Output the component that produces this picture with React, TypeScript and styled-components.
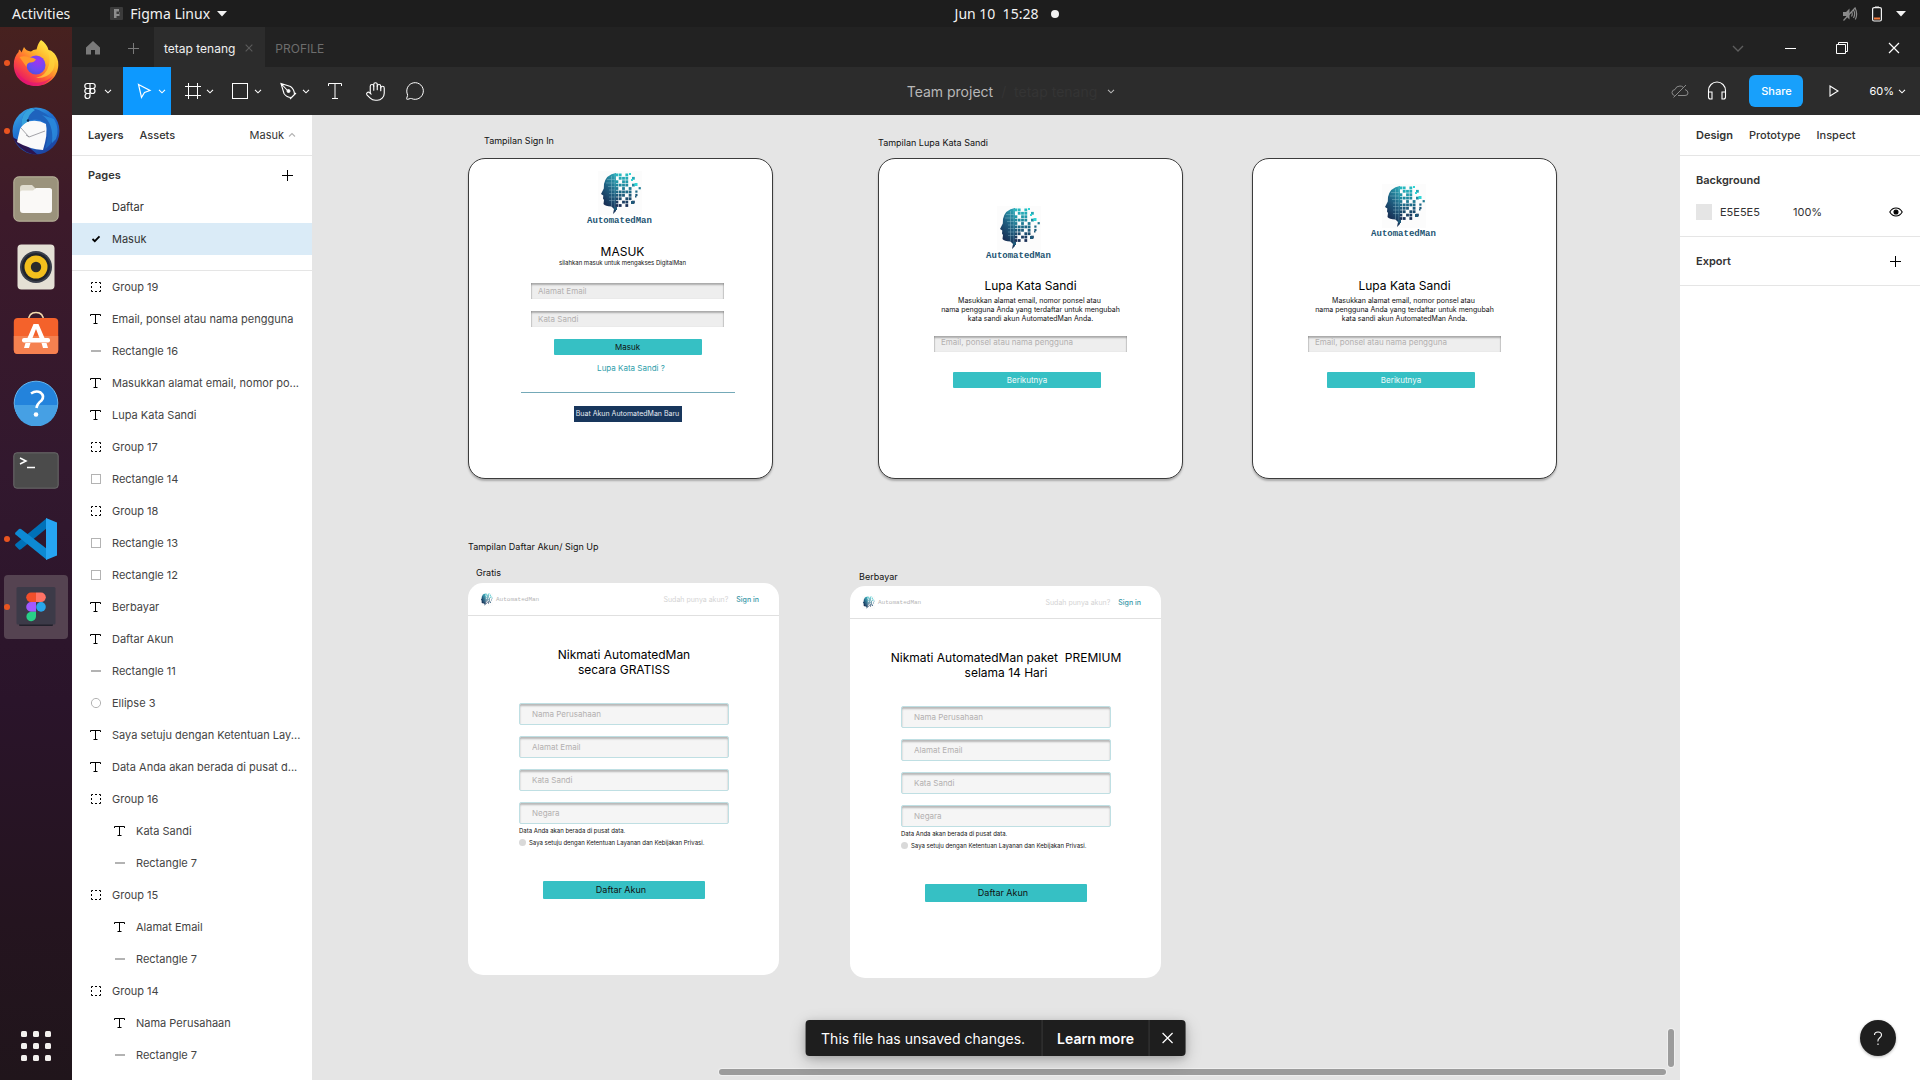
import React from 'react';
import styled, { createGlobalStyle } from 'styled-components';
import { Hand, MessageCircle } from 'lucide-react';

const GlobalStyle = createGlobalStyle`
  *, *::before, *::after { box-sizing: border-box; }
  body { margin: 0; font-family: Inter, "Liberation Sans", sans-serif; font-size: 11px; color: #333; }
  button, input { font: inherit; color: inherit; }
  button { border: 0; padding: 0; background: none; }
  h1, h2, p, ul { margin: 0; padding: 0; font-weight: 400; }
  ul { list-style: none; }
  a { color: inherit; text-decoration: none; }
  svg { display: block; flex: none; }
`;

const Desktop = styled.div`
  display: grid;
  grid-template-rows: 27px 1fr;
  height: 100vh;
  overflow: hidden;
  background: #1d1d1d;
`;

/* ---------- System bar ---------- */
const SystemBar = styled.header`
  display: grid;
  grid-template-columns: 1fr auto 1fr;
  align-items: center;
  padding: 0 12px;
  background: #1d1d1d;
  color: #f2f2f2;
  font-family: "Noto Sans", sans-serif;
  font-size: 14px;
`;
const SystemLeft = styled.div`
  display: flex;
  align-items: center;
  gap: 40px;
`;
const SystemApp = styled.button`
  display: flex;
  align-items: center;
  gap: 7px;
`;
const Clock = styled.button`
  display: flex;
  align-items: center;
  gap: 13px;
  padding-left: 94px;
  white-space: pre;
`;
const ClockDot = styled.span`
  width: 8px;
  height: 8px;
  border-radius: 50%;
  background: #f2f2f2;
`;
const SystemTray = styled.div`
  display: flex;
  align-items: center;
  justify-content: flex-end;
  gap: 14px;
  padding-right: 2px;
`;

const Body = styled.div`
  display: grid;
  grid-template-columns: 72px 1fr;
  min-height: 0;
`;

/* ---------- Dock ---------- */
const DockBar = styled.nav`
  display: flex;
  flex-direction: column;
  align-items: center;
  justify-content: space-between;
  padding: 4px 4px 2px;
  background: linear-gradient(#47211f 0%, #3c1a2a 18%, #32182e 42%, #2a142a 64%, #24141f 85%, #20151b 100%);
`;
const DockList = styled.div`
  display: flex;
  flex-direction: column;
  gap: 4px;
`;
const DockButton = styled.button<{ $active?: boolean; $running?: boolean }>`
  position: relative;
  display: flex;
  align-items: center;
  justify-content: center;
  width: 64px;
  height: 64px;
  border-radius: 4px;
  background: ${p => (p.$active ? '#554351' : 'transparent')};
  &::before {
    content: '';
    display: ${p => (p.$running ? 'block' : 'none')};
    position: absolute;
    left: 0;
    top: 29px;
    width: 6px;
    height: 6px;
    border-radius: 50%;
    background: #e95420;
  }
`;

/* ---------- Application window ---------- */
const Window = styled.div`
  display: grid;
  grid-template-rows: 40px 48px 1fr;
  min-width: 0;
  min-height: 0;
`;
const TabBar = styled.div`
  display: flex;
  background: #222;
  color: #6d6d6d;
  font-size: 12px;
`;
const TabIcon = styled.button`
  display: flex;
  align-items: center;
  justify-content: center;
  width: 41px;
  padding-top: 2px;
  color: #7a7a7a;
`;
const FileTab = styled.div<{ $active?: boolean }>`
  display: flex;
  align-items: center;
  gap: 10px;
  padding: 2px ${p => (p.$active ? '12px' : '10px')} 0 10px;
  background: ${p => (p.$active ? '#2c2c2c' : 'transparent')};
  color: ${p => (p.$active ? '#f0f0f0' : '#6d6d6d')};
`;
const CloseTab = styled.button`
  color: #5c5c5c;
`;
const WindowControls = styled.div`
  display: flex;
  margin-left: auto;
`;
const WindowButton = styled.button<{ $dim?: boolean }>`
  display: flex;
  align-items: center;
  justify-content: center;
  width: 52px;
  padding-top: 2px;
  color: ${p => (p.$dim ? '#5e5e5e' : '#fff')};
`;

const Toolbar = styled.div`
  display: grid;
  grid-template-columns: 1fr auto 1fr;
  background: #2c2c2c;
  color: #fff;
`;
const Tools = styled.div`
  display: flex;
`;
const ToolButton = styled.button<{ $active?: boolean; $single?: boolean; $menu?: boolean }>`
  display: flex;
  align-items: center;
  justify-content: ${p => (p.$single ? 'center' : 'flex-start')};
  width: ${p => (p.$single ? '40px' : p.$menu ? '51px' : '48px')};
  padding-left: ${p => (p.$single ? '0' : p.$menu ? '6px' : '9px')};
  background: ${p => (p.$active ? '#0d99ff' : 'transparent')};
`;
const FileTitle = styled.div`
  display: flex;
  align-items: center;
  padding-left: 32px;
  font-size: 14px;
  color: #b8b8b8;
`;
const FaintName = styled.span`
  padding: 0 8px;
  color: #343434;
  white-space: pre;
`;
const ToolbarRight = styled.div`
  display: flex;
  align-items: center;
  justify-content: flex-end;
  gap: 22px;
  padding-right: 12px;
`;
const StatusIcons = styled.div`
  display: flex;
  align-items: center;
  gap: 18px;
`;
const ShareButton = styled.button`
  width: 54px;
  height: 32px;
  border-radius: 6px;
  background: #18a0fb;
  color: #fff;
  font-weight: 500;
`;
const PlayButton = styled.button`
  padding: 0 8px 0 4px;
`;
const Zoom = styled.button`
  display: flex;
  align-items: center;
  gap: 2px;
`;

const Workspace = styled.div`
  display: grid;
  grid-template-columns: 240px 1fr 241px;
  min-height: 0;
`;

/* ---------- Panels ---------- */
const Panel = styled.aside<{ $right?: boolean }>`
  display: flex;
  flex-direction: column;
  min-height: 0;
  overflow: hidden;
  background: #fff;
  border-left: ${p => (p.$right ? '1px solid #e5e5e5' : '0')};
`;
const PanelTabs = styled.div`
  display: flex;
  align-items: center;
  gap: 16px;
  flex: none;
  height: 41px;
  padding: 0 14px 0 16px;
  border-bottom: 1px solid #e5e5e5;
`;
const PanelTab = styled.button<{ $active?: boolean; $strong?: boolean }>`
  font-weight: ${p => (p.$active ? 600 : p.$strong ? 500 : 400)};
  color: #333;
`;
const PagePicker = styled.button`
  display: flex;
  align-items: center;
  gap: 2px;
  margin-left: auto;
`;
const PagesSection = styled.section`
  flex: none;
  padding: 3px 0 15px;
  border-bottom: 1px solid #e5e5e5;
`;
const SectionHeader = styled.div`
  display: flex;
  align-items: center;
  justify-content: space-between;
  height: 32px;
  padding: 0 19px 0 16px;
`;
const SectionTitle = styled.h2`
  font-size: 11px;
  font-weight: 600;
`;
const PageRow = styled.li<{ $selected?: boolean }>`
  display: flex;
  align-items: center;
  gap: 8px;
  height: 32px;
  padding: 0 16px;
  background: ${p => (p.$selected ? '#daebf7' : 'transparent')};
`;
const PageMark = styled.span`
  width: 16px;
`;
const LayerList = styled.ul`
  flex: 1;
  min-height: 0;
  overflow: hidden;
`;
const LayerRow = styled.li<{ $nested?: boolean }>`
  display: flex;
  align-items: center;
  gap: 8px;
  height: 32px;
  padding: 0 8px 0 ${p => (p.$nested ? '40px' : '16px')};
`;
const LayerName = styled.span`
  white-space: nowrap;
  color: #444;
`;
const DesignSection = styled.section`
  padding: 8px 0;
  border-bottom: 1px solid #e5e5e5;
`;
const ColourRow = styled.div`
  display: flex;
  align-items: center;
  height: 32px;
  padding: 0 17px 0 16px;
`;
const Swatch = styled.span`
  width: 16px;
  height: 16px;
  margin-right: 8px;
  background: #e5e5e5;
`;
const Hex = styled.span`
  width: 73px;
`;
const EyeButton = styled.button`
  margin-left: auto;
`;

/* ---------- Canvas ---------- */
const Canvas = styled.main`
  position: relative;
  overflow: hidden;
  background: #e5e5e5;
`;
const CanvasText = styled.p<{ $x: number; $y: number }>`
  position: absolute;
  left: ${p => p.$x}px;
  top: ${p => p.$y}px;
  font-size: 9px;
  line-height: 12px;
  color: #111;
  white-space: nowrap;
`;
const LoginBoard = styled.article<{ $x: number; $y: number; $top: number }>`
  position: absolute;
  left: ${p => p.$x}px;
  top: ${p => p.$y}px;
  display: flex;
  flex-direction: column;
  align-items: center;
  width: 305px;
  height: 321px;
  padding-top: ${p => p.$top}px;
  border: 1px solid #3c3c3c;
  border-radius: 17px;
  background: #fff;
  box-shadow: 0 2px 2px rgba(0, 0, 0, 0.25);
  color: #111;
`;
const Brand = styled.div<{ $shift: number; $gap: number }>`
  display: flex;
  flex-direction: column;
  align-items: center;
  padding-right: ${p => p.$shift}px;
  margin-bottom: ${p => p.$gap}px;
  font: 700 9px/12px "Liberation Mono", monospace;
  color: #1d5573;
`;
const BoardTitle = styled.h1`
  font-size: 12px;
  line-height: 14px;
  text-align: center;
  white-space: pre;
  color: #000;
`;
const BoardText = styled.p<{ $small?: boolean }>`
  font-size: ${p => (p.$small ? '6px' : '7px')};
  line-height: ${p => (p.$small ? '8px' : '9px')};
  text-align: center;
  white-space: pre;
`;
const Intro = styled.div<{ $shift: number; $gap: number }>`
  display: flex;
  flex-direction: column;
  align-items: center;
  gap: ${p => p.$gap}px;
  padding-left: ${p => p.$shift}px;
`;
const SignInForm = styled.form`
  display: flex;
  flex-direction: column;
  align-items: center;
  gap: 12px;
  padding: 16px 0 0 14px;
`;
const SignInActions = styled.div`
  display: flex;
  flex-direction: column;
  align-items: center;
  gap: 7px;
`;
const ResetForm = styled.form`
  display: flex;
  flex-direction: column;
  align-items: center;
  gap: 20px;
  padding-top: 13px;
`;
const FlatInput = styled.input<{ $high?: boolean }>`
  width: 193px;
  height: 16px;
  padding: 0 7px ${p => (p.$high ? '5px' : '0')};
  border: 0;
  background: #eee;
  box-shadow: inset 0 2px 2px rgba(0, 0, 0, 0.28), inset -1px 0 1px rgba(0, 0, 0, 0.1), inset 1px 0 1px rgba(0, 0, 0, 0.1);
  font-size: 8px;
  line-height: 10px;
  &::placeholder { color: #b3b0b0; opacity: 1; }
`;
const TealButton = styled.button<{ $light?: boolean; $large?: boolean }>`
  width: ${p => (p.$large ? '162px' : '148px')};
  height: ${p => (p.$large ? '18px' : '16px')};
  padding-right: ${p => (p.$large ? '6px' : '0')};
  border-radius: 1px;
  background: #36c0c4;
  color: ${p => (p.$light ? '#f2fbfb' : '#111')};
  font-size: ${p => (p.$large ? '9px' : '8px')};
  line-height: 12px;
`;
const ResetActions = styled.div`
  padding-right: 7px;
`;
const ForgotLink = styled.a`
  padding-left: 7px;
  font-size: 8px;
  line-height: 12px;
  color: #2f9eab;
`;
const Rule = styled.hr`
  width: 214px;
  height: 1px;
  margin: 6px 0 1px;
  border: 0;
  background: #74a9b8;
`;
const DarkButton = styled.button`
  width: 108px;
  height: 16px;
  background: #18365c;
  color: #e6ebf2;
  font-size: 7px;
  line-height: 10px;
`;

const SignUpBoard = styled.article<{ $x: number; $y: number }>`
  position: absolute;
  left: ${p => p.$x}px;
  top: ${p => p.$y}px;
  width: 311px;
  height: 392px;
  border-radius: 15px;
  background: #fff;
  color: #111;
`;
const BoardHeader = styled.header`
  display: flex;
  align-items: center;
  height: 33px;
  padding: 1px 20px 0 12px;
  border-bottom: 1px solid #e0e0e0;
`;
const SmallBrand = styled.span`
  margin: 0 auto 0 3px;
  font: 400 6px/8px "Liberation Mono", monospace;
  color: #b5b5b5;
`;
const Question = styled.span`
  margin-right: 8px;
  font-size: 7px;
  line-height: 10px;
  color: #d4d4d4;
`;
const SignInLink = styled.a`
  font-size: 7px;
  font-weight: 500;
  line-height: 10px;
  color: #3998a8;
`;
const SignUpForm = styled.form`
  display: flex;
  flex-direction: column;
  padding: 31px 50px 0 51px;
`;
const SignUpTitle = styled(BoardTitle)`
  align-self: center;
  line-height: 15px;
`;
const Fields = styled.div`
  display: flex;
  flex-direction: column;
  gap: 11px;
  padding-top: 26px;
`;
const BoxInput = styled.input`
  width: 100%;
  height: 22px;
  padding: 0 12px;
  border: 1px solid #bfdfe3;
  border-radius: 2px;
  background: #f5f5f5;
  box-shadow: inset 0 2px 2px rgba(0, 0, 0, 0.25);
  font-size: 8px;
  line-height: 10px;
  &::placeholder { color: #b3b0b0; opacity: 1; }
`;
const Note = styled.p`
  padding-top: 2px;
  font-size: 6px;
  line-height: 9px;
`;
const Agree = styled.label`
  display: flex;
  align-items: center;
  gap: 3px;
  margin-top: 3px;
  font-size: 6px;
  line-height: 9px;
  white-space: nowrap;
`;
const AgreeDot = styled.input`
  appearance: none;
  width: 7px;
  height: 7px;
  margin: 0;
  border-radius: 50%;
  background: #d9d9d9;
`;
const SignUpAction = styled.div`
  display: flex;
  justify-content: center;
  padding-top: 34px;
`;

const Toast = styled.div`
  position: absolute;
  left: 50%;
  bottom: 24px;
  transform: translateX(-50%);
  display: flex;
  height: 36px;
  border-radius: 4px;
  background: #1e1e1e;
  box-shadow: 0 5px 17px rgba(0, 0, 0, 0.2), 0 2px 7px rgba(0, 0, 0, 0.15);
  color: #fff;
  font-size: 14px;
  white-space: nowrap;
`;
const ToastPart = styled.span`
  display: flex;
  align-items: center;
  padding: 0 16px;
`;
const ToastAction = styled.button<{ $tight?: boolean }>`
  display: flex;
  align-items: center;
  padding: 0 ${p => (p.$tight ? '12px' : '15px')};
  border-left: 1px solid #393939;
  font-weight: 600;
`;
const HScroll = styled.div`
  position: absolute;
  left: 407px;
  right: 13px;
  bottom: 5px;
  height: 6px;
  border-radius: 3px;
  background: #9c9c9c;
  box-shadow: 0 0 0 1px #efefef;
`;
const VScroll = styled.div`
  position: absolute;
  right: 5px;
  bottom: 13px;
  width: 6px;
  height: 38px;
  border-radius: 3px;
  background: #9c9c9c;
  box-shadow: 0 0 0 1px #efefef;
`;
const HelpButton = styled.button`
  display: flex;
  align-items: center;
  justify-content: center;
  align-self: flex-end;
  width: 36px;
  height: 36px;
  margin: auto 24px 24px 0;
  border-radius: 50%;
  background: #1e1e1e;
  color: #fff;
  box-shadow: 0 1px 3px rgba(0, 0, 0, 0.3);
`;

/* ---------- Drawings ---------- */
const Chevron = ({ size = 12, up, color = 'currentColor' }: { size?: number; up?: boolean; color?: string }) => (
  <svg width={size} height={size} viewBox="0 0 12 12" fill="none" stroke={color} strokeWidth={size > 12 ? 0.8 : 1.1}>
    <path d={up ? 'M3 7.5 6 4.5 9 7.5' : 'M3 4.8 6 7.8 9 4.8'} />
  </svg>
);
const Caret = () => (
  <svg width="10" height="6" viewBox="0 0 10 6" fill="#f2f2f2"><path d="M0 0H10L5 5.5Z" /></svg>
);
const Cross = ({ size = 12, w = 1.2 }: { size?: number; w?: number }) => (
  <svg width={size} height={size} viewBox="0 0 12 12" stroke="currentColor" strokeWidth={w}><path d="M1 1 11 11M11 1 1 11" /></svg>
);
const Plus = ({ color = '#000' }: { color?: string }) => (
  <svg width="11" height="11" viewBox="0 0 11 11" stroke={color} strokeWidth="1"><path d="M5.5 0V11M0 5.5H11" /></svg>
);

const SysFigma = () => (
  <svg width="13" height="13" viewBox="0 0 13 13">
    <rect width="13" height="13" rx="1" fill="#3b3b3b" />
    <path d="M4 2h5v2.5H6.5V7H9V5h.5v4H6.5v2H4Z" fill="#8d8d8d" />
  </svg>
);
const Mute = () => (
  <svg width="16" height="14" viewBox="0 0 16 14" fill="none" stroke="#8a8a8a" strokeWidth="1.2">
    <path d="M1 5H4L7.5 1.5V12.5L4 9H1Z" fill="#8a8a8a" stroke="none" />
    <path d="M9.5 4.5Q11 7 9.5 9.5M11.5 3Q13.8 7 11.5 11M13.3 1.5Q16 7 13.3 12.5M1.5 13.5 13.5 .5" />
  </svg>
);
const Battery = () => (
  <svg width="10" height="16" viewBox="0 0 10 16">
    <path d="M3 .5H7V2H3Z" fill="#f2f2f2" />
    <rect x=".6" y="1.6" width="8.8" height="13.4" rx="1.5" fill="none" stroke="#f2f2f2" strokeWidth="1.2" />
    <rect x="2" y="11.5" width="6" height="2" fill="#f47b3c" />
  </svg>
);

const Firefox = () => (
  <svg width="46" height="46" viewBox="0 0 46 46">
    <defs>
      <linearGradient id="ffBody" x1=".85" y1=".1" x2=".2" y2=".95">
        <stop offset="0" stopColor="#fff14a" /><stop offset=".35" stopColor="#ffb12a" /><stop offset=".65" stopColor="#ff5a35" /><stop offset="1" stopColor="#e4106d" />
      </linearGradient>
      <radialGradient id="ffGlobe" cx=".6" cy=".3" r=".8">
        <stop offset="0" stopColor="#a034f0" /><stop offset=".6" stopColor="#6a4bf2" /><stop offset="1" stopColor="#4a4fd8" />
      </radialGradient>
    </defs>
    <path d="M28 0C32 2.5 34.5 6 35.5 10C39 10 40 13 41 13C44 17 45.5 20 45.3 25C45 37 35 46 23 46C10 46 .8 37 .8 25C.8 19 2.5 15 5.5 12L6 9.500Q8 10.500 8.500 12.500L11 7Q13 11 18 11.500Q21 9 23.500 9.500Q25 3 28 0Z" fill="url(#ffBody)" />
    <path d="M33 9Q38 16 36 25Q33 36 23 38Q34 39 40 30Q44 21 39 13Z" fill="#ffd53c" opacity=".7" />
    <circle cx="23" cy="25" r="9.5" fill="url(#ffGlobe)" />
    <path d="M6.500 17Q12 15.500 16 17.500Q20 17 23 19.500Q21 23 16.500 22.500Q13.500 23.500 13.500 27Q10 22 6.500 17Z" fill="#ff9a2c" />
    <path d="M2 27Q5 38 17 42Q30 45 40 36Q33 46 22 46Q6 45 2 27Z" fill="#e0127a" opacity=".6" />
  </svg>
);
const Thunderbird = () => (
  <svg width="48" height="48" viewBox="0 0 48 48">
    <defs>
      <linearGradient id="tbBody" x1=".2" y1="0" x2=".8" y2="1">
        <stop offset="0" stopColor="#3aa7e4" /><stop offset=".4" stopColor="#1f6fd0" /><stop offset="1" stopColor="#1c3f9c" />
      </linearGradient>
    </defs>
    <circle cx="24" cy="24" r="23.5" fill="url(#tbBody)" />
    <path d="M0 30Q8 44 20 47L26 48Q10 34 4 32Z" fill="#2c1550" />
    <path d="M12 16Q24 11 34 17Q36 27 31 43Q17 42 5 35L8 22Z" fill="#fafafa" />
    <path d="M9 21 17 30 33 24M17 30 14 28" fill="none" stroke="#8d8d93" strokeWidth=".8" />
    <path d="M20 1Q9 4 9.500 19L15 14Q26 10 34 16Q38 26 33 42Q45 34 43 18Q36 4 20 1Z" fill="#1e63bd" />
    <path d="M20 1Q9 4 9.500 19L15 15Q17 6 23 3Z" fill="#36a2dd" />
    <path d="M30 8Q42 16 40 36L44 32Q48 22 42 12Z" fill="#2c8fe0" opacity=".8" />
    <circle cx="16" cy="13.5" r="1.2" fill="#0c2c50" />
  </svg>
);
const Files = () => (
  <svg width="46" height="46" viewBox="0 0 46 46">
    <rect x=".8" y=".8" width="44.4" height="44.4" rx="5" fill="#9b937c" stroke="#bdb79f" strokeWidth="1" />
    <path d="M7 12Q7 9 10 9H19L23 13H37Q39 13 39 15V25H7Z" fill="#e0dccf" />
    <path d="M7 16.500Q7 14.500 9 14.500H20L23 12H36.500Q39 12 39 14.500V34Q39 37 36 37H10Q7 37 7 34Z" fill="#faf9f7" />
  </svg>
);
const Rhythmbox = () => (
  <svg width="38" height="46" viewBox="0 0 38 46">
    <rect x=".5" y=".5" width="37" height="45" rx="4" fill="#e4e0d5" />
    <circle cx="19" cy="23" r="16" fill="#3a3f4b" />
    <circle cx="19" cy="23" r="14" fill="#20242c" />
    <circle cx="19" cy="23" r="11.5" fill="#f2bf1d" />
    <circle cx="19" cy="23" r="5.2" fill="#2b2b2b" />
  </svg>
);
const Software = () => (
  <svg width="46" height="48" viewBox="0 0 46 48">
    <path d="M15.500 10Q15.500 1.500 23 1.500Q30.500 1.500 30.500 10" fill="none" stroke="#f5dcae" strokeWidth="1.5" />
    <rect x=".8" y="7" width="44.4" height="36" rx="4" fill="#f4622b" />
    <path d="M.8 25H45.200V39Q45.200 43 41.200 43H4.800Q.8 43 .8 39Z" fill="#f58150" />
    <path d="M20.500 13H25.500L31.500 27H26.500L23 18L19.500 27H14.500ZM12.500 32H17.500L16 37H11ZM28.500 32H33.500L35 37H30Z" fill="#fff" />
    <rect x="9" y="27" width="28" height="4.5" rx="2" fill="#fff" />
  </svg>
);
const HelpIcon = () => (
  <svg width="46" height="46" viewBox="0 0 46 46">
    <circle cx="23" cy="23" r="21.8" fill="#2383dc" stroke="#65b5ee" strokeWidth="1" />
    <path d="M1.500 25H44.500A21.500 21.500 0 0 1 1.500 25Z" fill="#46a0e4" />
    <path d="M18 13.500Q23 10 27.500 12.500Q32 16 28.500 20.500Q24 24 23.500 28" fill="none" stroke="#fff" strokeWidth="2.6" />
    <circle cx="23" cy="34.5" r="2.3" fill="#fff" />
  </svg>
);
const Terminal = () => (
  <svg width="46" height="38" viewBox="0 0 46 38">
    <rect x=".8" y=".8" width="44.4" height="35.4" rx="3" fill="#4b4b4b" stroke="#6b6b6b" strokeWidth="1" />
    <path d="M7 6 13 9 7 12M14 15.500H22" fill="none" stroke="#fff" strokeWidth="1.5" />
  </svg>
);
const VSCode = () => (
  <svg width="44" height="44" viewBox="0 0 44 44">
    <path d="M1.500 29 5 32.500Q6 33 7 32.200L33 11V1L1.500 27Q.5 28 1.500 29Z" fill="#0071b8" />
    <path d="M1.500 15.500 5 12Q6 11.300 7 12L33 32V43L1.500 17.500Q.5 16.500 1.500 15.500Z" fill="#0d8ad4" />
    <path d="M32 1 43 5.500V38.500L32 43Z" fill="#26a5f2" />
  </svg>
);
const FigmaDock = () => (
  <svg width="40" height="42" viewBox="0 0 40 42">
    <rect x="3" y="34" width="34" height="6" rx="1" fill="#22202b" />
    <rect x=".5" y="1" width="39" height="37.5" rx="1.5" fill="#3c3a48" />
    <path d="M20 6.500H15A4.800 4.800 0 0 0 15 16.100H20Z" fill="#f24e2a" />
    <path d="M20 6.500H25A4.800 4.800 0 0 1 25 16.100H20Z" fill="#ff7265" />
    <path d="M20 16.100H15A4.800 4.800 0 0 0 15 25.700H20Z" fill="#a259ff" />
    <circle cx="25" cy="20.9" r="4.8" fill="#28a6ea" />
    <path d="M20 25.700H15A4.800 4.800 0 1 0 20 30.500Z" fill="#29d087" />
  </svg>
);
const AppsGrid = () => (
  <svg width="30" height="30" viewBox="0 0 30 30" fill="#f3f0ee">
    {[0, 12, 24].map(y => [0, 12, 24].map(x => <rect key={`${x}-${y}`} x={x} y={y} width="6" height="6" rx="1.5" />))}
  </svg>
);

const Icon24 = ({ children }: { children: React.ReactNode }) => (
  <svg width="24" height="24" viewBox="0 0 24 24" fill="none" stroke="#fff" strokeWidth="1">{children}</svg>
);
const FigmaMenu = () => (
  <Icon24>
    <path d="M12 4.500H9.300A2.500 2.500 0 0 0 9.300 9.500H12ZM12 4.500H14.700A2.500 2.500 0 0 1 14.700 9.500H12ZM12 9.500H9.300A2.500 2.500 0 0 0 9.300 14.500H12ZM12 14.500H9.300A2.500 2.500 0 1 0 12 17Z" strokeWidth="1.2" />
    <circle cx="14.5" cy="12" r="2.5" strokeWidth="1.2" />
  </Icon24>
);
const MoveTool = () => <Icon24><path d="M6.500 5.500 18 11.500 12.500 13.500 9.500 18.500Z" strokeWidth="1.2" /></Icon24>;
const FrameTool = () => <Icon24><path d="M8.500 4V20M17.500 4V20M5 7.500H21M5 16.500H21" /></Icon24>;
const RectTool = () => <Icon24><rect x="4.5" y="4.5" width="15" height="15" /></Icon24>;
const PenTool = () => (
  <Icon24>
    <path d="M5 4.500 14.500 7.500Q18.500 10.500 18.500 15.500L15.500 18.500Q10.500 18.500 8 14.500ZM5 4.500 11.500 11.500M14 20 20 14" strokeWidth="1.1" />
    <circle cx="12.5" cy="12" r="1.5" fill="#fff" />
  </Icon24>
);
const TextTool = () => <Icon24><path d="M5.500 7V4.500H18.500V7M12 4.500V19.500M9 19.500H15" /></Icon24>;
const CloudOff = () => (
  <svg width="18" height="14" viewBox="0 0 18 14" fill="none" stroke="#8a8a8a" strokeWidth="1">
    <path d="M3.500 11.500Q1 11 1 8.500Q1 6 4 5.500Q5 2 9 2Q10.500 2 12 3M14 5.500Q17 6.500 17 9Q17 11.500 14 11.500H7M2.500 13.500 15 1" />
  </svg>
);
const Headphones = () => (
  <svg width="20" height="20" viewBox="0 0 20 20" fill="none" stroke="#fff" strokeWidth="1.1">
    <path d="M1.500 13V9.500A8.500 8.500 0 0 1 18.500 9.500V13M1.500 11H5V18H3.500Q1.500 18 1.500 16ZM18.500 11H15V18H16.500Q18.500 18 18.500 16Z" />
  </svg>
);
const Home = () => (
  <svg width="16" height="16" viewBox="0 0 16 16" fill="#7a7a7a"><path d="M8 1 15 7.500V14.500H10V10H6V14.500H1V7.500Z" /></svg>
);
const Restore = () => (
  <svg width="12" height="12" viewBox="0 0 12 12" fill="none" stroke="#fff"><path d="M.5 2.500H9.500V11.500H.5ZM2.500 2.500V.5H11.500V9.500H9.500" /></svg>
);
const Eye = () => (
  <svg width="14" height="10" viewBox="0 0 14 10" fill="none" stroke="#000" strokeWidth="1.1">
    <path d="M.8 5Q3 1 7 1T13.200 5Q11 9 7 9T.8 5Z" /><circle cx="7" cy="5" r="2" fill="#000" />
  </svg>
);
const Check = () => (
  <svg width="16" height="8" viewBox="-4 0 16 8" fill="none" stroke="#000" strokeWidth="1.8"><path d="M.5 4 2.800 6.200 7.500 1.300" /></svg>
);

type Kind = 'group' | 'text' | 'line' | 'rect' | 'ellipse';
const LayerIcon = ({ kind }: { kind: Kind }) => (
  <svg width="16" height="16" viewBox="0 0 16 16" fill="none">
    {kind === 'group' && (
      <path
        d="M3.500 5V3.500H5M7 3.500H9M11 3.500H12.500V5M12.500 7V9M12.500 11V12.500H11M9 12.500H7M5 12.500H3.500V11M3.500 9V7"
        stroke="#000"
      />
    )}
    {kind === 'text' && <path d="M2.500 5V3.500H12.500V5M7.500 3.500V12.500M5.500 12.500H9.500" stroke="#000" />}
    {kind === 'line' && <path d="M3 8H13" stroke="#b3b3b3" strokeWidth="2" />}
    {kind === 'rect' && <rect x="3.5" y="3.5" width="9" height="9" stroke="#b3b3b3" />}
    {kind === 'ellipse' && <circle cx="8" cy="8" r="4.6" stroke="#b3b3b3" />}
  </svg>
);

const pixelRows = [
  '##.#....',
  '.###.#..',
  '#.##....',
  '####.#..',
  '#.#.#..#',
  '#####.#.',
  '###.#.#.',
  '##.##...',
  '#.##.#..',
  '##.#....',
];
const pixelShade = ['#27b9bf', '#24a9b6', '#2299aa', '#1f8a9f', '#1f7a93', '#1e6a87', '#1e5a7a', '#1d4b6d', '#1c3d61', '#1b3157'];
const HeadLogo = ({ size, id }: { size: number; id: string }) => (
  <svg width={size} height={size} viewBox="1 1 44 44">
    <defs>
      <linearGradient id={id} x1=".7" y1="0" x2=".3" y2="1">
        <stop offset="0" stopColor="#2b9fb0" /><stop offset=".4" stopColor="#1f5e80" /><stop offset="1" stopColor="#14183f" />
      </linearGradient>
    </defs>
    <rect x="1" y="1" width="44" height="44" fill="#fcfcfc" />
    <path d="M19 3Q9 4.500 7 14L6.800 18.500L4 24L6.300 25.500L6 28.500L7 30L6.500 34Q8 36 14.500 36.500L17 39L16 44L19 41V3Z" fill={`url(#${id})`} />
    <path d="M18 4V38M14.500 6V36M10 9.500H18M9 13H18M11 16.500H18M12 20H18M12 23.500H18M12 27H18M12 30.500H18" stroke="#bfe3ea" strokeWidth=".5" opacity=".6" />
    {pixelRows.map((row, r) =>
      row.split('').map((c, i) =>
        c === '#' ? (
          <rect
            key={`${r}-${i}`}
            x={18.5 + i * 3.3}
            y={3.5 + r * 3.4}
            width={i > 5 ? 2.2 : 2.8}
            height={i > 5 ? 2.2 : 2.8}
            fill={pixelShade[r]}
          />
        ) : null
      )
    )}
    <path d="M32 3H34V5H32ZM37.500 13H40.500V16H37.500ZM34 9H36V11H34Z" fill="#2fd6d6" />
    <path d="M38 26H39.500V27.500H38ZM34 31H37V34H34ZM17 37H20V40H17Z" fill="#1e5878" />
  </svg>
);

/* ---------- Data ---------- */
const layers: { kind: Kind; name: string; nested?: boolean }[] = [
  { kind: 'group', name: 'Group 19' },
  { kind: 'text', name: 'Email, ponsel atau nama pengguna' },
  { kind: 'line', name: 'Rectangle 16' },
  { kind: 'text', name: 'Masukkan alamat email, nomor po...' },
  { kind: 'text', name: 'Lupa Kata Sandi' },
  { kind: 'group', name: 'Group 17' },
  { kind: 'rect', name: 'Rectangle 14' },
  { kind: 'group', name: 'Group 18' },
  { kind: 'rect', name: 'Rectangle 13' },
  { kind: 'rect', name: 'Rectangle 12' },
  { kind: 'text', name: 'Berbayar' },
  { kind: 'text', name: 'Daftar Akun' },
  { kind: 'line', name: 'Rectangle 11' },
  { kind: 'ellipse', name: 'Ellipse 3' },
  { kind: 'text', name: 'Saya setuju dengan Ketentuan Lay...' },
  { kind: 'text', name: 'Data Anda akan berada di pusat d...' },
  { kind: 'group', name: 'Group 16' },
  { kind: 'text', name: 'Kata Sandi', nested: true },
  { kind: 'line', name: 'Rectangle 7', nested: true },
  { kind: 'group', name: 'Group 15' },
  { kind: 'text', name: 'Alamat Email', nested: true },
  { kind: 'line', name: 'Rectangle 7', nested: true },
  { kind: 'group', name: 'Group 14' },
  { kind: 'text', name: 'Nama Perusahaan', nested: true },
  { kind: 'line', name: 'Rectangle 7', nested: true },
];

const dockItems = [
  { name: 'Firefox', icon: <Firefox />, running: true },
  { name: 'Thunderbird', icon: <Thunderbird />, running: true },
  { name: 'Files', icon: <Files /> },
  { name: 'Rhythmbox', icon: <Rhythmbox /> },
  { name: 'Software', icon: <Software /> },
  { name: 'Help', icon: <HelpIcon /> },
  { name: 'Terminal', icon: <Terminal /> },
  { name: 'Visual Studio Code', icon: <VSCode />, running: true },
  { name: 'Figma Linux', icon: <FigmaDock />, running: true, active: true },
];

/* ---------- Boards ---------- */
const SignIn = () => (
  <LoginBoard $x={156} $y={43} $top={12}>
    <Brand $shift={2} $gap={18}><HeadLogo size={44} id="headA" />AutomatedMan</Brand>
    <Intro $shift={4} $gap={0}>
      <BoardTitle>MASUK</BoardTitle>
      <BoardText $small>silahkan masuk untuk mengakses DigitalMan</BoardText>
    </Intro>
    <SignInForm>
      <FlatInput aria-label="Alamat Email" placeholder="Alamat Email" />
      <FlatInput aria-label="Kata Sandi" type="password" placeholder="Kata Sandi" />
      <SignInActions>
        <TealButton type="button">Masuk</TealButton>
        <ForgotLink href="#lupa">Lupa Kata Sandi ?</ForgotLink>
      </SignInActions>
      <Rule />
      <DarkButton type="button">Buat Akun AutomatedMan Baru</DarkButton>
    </SignInForm>
  </LoginBoard>
);

const Reset = ({ x, top, shift, gap, id }: { x: number; top: number; shift: number; gap: number; id: string }) => (
  <LoginBoard $x={x} $y={43} $top={top}>
    <Brand $shift={shift} $gap={gap}><HeadLogo size={44} id={id} />AutomatedMan</Brand>
    <Intro $shift={0} $gap={3}>
      <BoardTitle>Lupa Kata Sandi</BoardTitle>
      <BoardText>{'Masukkan alamat email, nomor ponsel atau \nnama pengguna Anda yang terdaftar untuk mengubah\nkata sandi akun AutomatedMan Anda.'}</BoardText>
    </Intro>
    <ResetForm>
      <FlatInput $high aria-label="Email, ponsel atau nama pengguna" placeholder="Email, ponsel atau nama pengguna" />
      <ResetActions><TealButton $light type="button">Berikutnya</TealButton></ResetActions>
    </ResetForm>
  </LoginBoard>
);

const SignUp = ({ x, y, title, id }: { x: number; y: number; title: string; id: string }) => (
  <SignUpBoard $x={x} $y={y}>
    <BoardHeader>
      <HeadLogo size={13} id={id} />
      <SmallBrand>AutomatedMan</SmallBrand>
      <Question>Sudah punya akun?</Question>
      <SignInLink href="#masuk">Sign in</SignInLink>
    </BoardHeader>
    <SignUpForm>
      <SignUpTitle>{title}</SignUpTitle>
      <Fields>
        {['Nama Perusahaan', 'Alamat Email', 'Kata Sandi', 'Negara'].map(f => (
          <BoxInput key={f} aria-label={f} placeholder={f} />
        ))}
      </Fields>
      <Note>Data Anda akan berada di pusat data.</Note>
      <Agree><AgreeDot type="radio" />Saya setuju dengan Ketentuan Layanan dan Kebijakan Privasi.</Agree>
      <SignUpAction><TealButton $large type="button">Daftar Akun</TealButton></SignUpAction>
    </SignUpForm>
  </SignUpBoard>
);

export default function App() {
  return (
    <Desktop>
      <GlobalStyle />
      <SystemBar>
        <SystemLeft>
          <button>Activities</button>
          <SystemApp><SysFigma />Figma Linux<Caret /></SystemApp>
        </SystemLeft>
        <Clock>{'Jun 10  15:28'}<ClockDot /></Clock>
        <SystemTray><Mute /><Battery /><Caret /></SystemTray>
      </SystemBar>
      <Body>
        <DockBar>
          <DockList>
            {dockItems.map(d => (
              <DockButton key={d.name} aria-label={d.name} $running={d.running} $active={d.active}>{d.icon}</DockButton>
            ))}
          </DockList>
          <DockButton aria-label="Show applications"><AppsGrid /></DockButton>
        </DockBar>
        <Window>
          <TabBar>
            <TabIcon aria-label="Home"><Home /></TabIcon>
            <TabIcon aria-label="New tab"><Plus color="#7a7a7a" /></TabIcon>
            <FileTab $active>tetap tenang<CloseTab aria-label="Close tab"><Cross size={8} w={1.6} /></CloseTab></FileTab>
            <FileTab>PROFILE</FileTab>
            <WindowControls>
              <WindowButton $dim aria-label="Tab list"><Chevron size={20} /></WindowButton>
              <WindowButton aria-label="Minimise"><svg width="11" height="1"><rect width="11" height="1" fill="#fff" /></svg></WindowButton>
              <WindowButton aria-label="Restore"><Restore /></WindowButton>
              <WindowButton aria-label="Close"><Cross /></WindowButton>
            </WindowControls>
          </TabBar>
          <Toolbar>
            <Tools>
              <ToolButton $menu aria-label="Main menu"><FigmaMenu /><Chevron /></ToolButton>
              <ToolButton $active aria-label="Move"><MoveTool /><Chevron /></ToolButton>
              <ToolButton aria-label="Frame"><FrameTool /><Chevron /></ToolButton>
              <ToolButton aria-label="Rectangle"><RectTool /><Chevron /></ToolButton>
              <ToolButton aria-label="Pen"><PenTool /><Chevron /></ToolButton>
              <ToolButton $single aria-label="Text"><TextTool /></ToolButton>
              <ToolButton $single aria-label="Hand"><Hand size={21} strokeWidth={1.3} /></ToolButton>
              <ToolButton $single aria-label="Comment"><MessageCircle size={20} strokeWidth={1.2} /></ToolButton>
            </Tools>
            <FileTitle>Team project<FaintName>{'/  tetap tenang'}</FaintName><Chevron /></FileTitle>
            <ToolbarRight>
              <StatusIcons><CloudOff /><Headphones /></StatusIcons>
              <ShareButton>Share</ShareButton>
              <PlayButton aria-label="Present">
                <svg width="10" height="12" viewBox="0 0 10 12" fill="none" stroke="#fff" strokeWidth="1.1"><path d="M1 1V11L9 6Z" /></svg>
              </PlayButton>
              <Zoom>60%<Chevron /></Zoom>
            </ToolbarRight>
          </Toolbar>
          <Workspace>
            <Panel>
              <PanelTabs>
                <PanelTab $active>Layers</PanelTab>
                <PanelTab $strong>Assets</PanelTab>
                <PagePicker>Masuk<Chevron up color="#b3b3b3" /></PagePicker>
              </PanelTabs>
              <PagesSection>
                <SectionHeader>
                  <SectionTitle>Pages</SectionTitle>
                  <button aria-label="Add page"><Plus /></button>
                </SectionHeader>
                <ul>
                  <PageRow><PageMark />Daftar</PageRow>
                  <PageRow $selected><PageMark><Check /></PageMark>Masuk</PageRow>
                </ul>
              </PagesSection>
              <LayerList>
                {layers.map((l, i) => (
                  <LayerRow key={i} $nested={l.nested}><LayerIcon kind={l.kind} /><LayerName>{l.name}</LayerName></LayerRow>
                ))}
              </LayerList>
            </Panel>
            <Canvas>
              <CanvasText $x={172} $y={20}>Tampilan Sign In</CanvasText>
              <CanvasText $x={566} $y={22}>Tampilan Lupa Kata Sandi</CanvasText>
              <CanvasText $x={156} $y={426}>Tampilan Daftar Akun/ Sign Up</CanvasText>
              <CanvasText $x={164} $y={452}>Gratis</CanvasText>
              <CanvasText $x={547} $y={456}>Berbayar</CanvasText>
              <SignIn />
              <Reset x={566} top={47} shift={24} gap={17} id="headB" />
              <Reset x={940} top={25} shift={2} gap={39} id="headC" />
              <SignUp x={156} y={468} id="headD" title={'Nikmati AutomatedMan\nsecara GRATISS'} />
              <SignUp x={538} y={471} id="headE" title={'Nikmati AutomatedMan paket  PREMIUM\nselama 14 Hari'} />
              <HScroll />
              <VScroll />
              <Toast>
                <ToastPart>This file has unsaved changes.</ToastPart>
                <ToastAction>Learn more</ToastAction>
                <ToastAction $tight aria-label="Dismiss"><Cross /></ToastAction>
              </Toast>
            </Canvas>
            <Panel $right>
              <PanelTabs>
                <PanelTab $active>Design</PanelTab>
                <PanelTab $strong>Prototype</PanelTab>
                <PanelTab $strong>Inspect</PanelTab>
              </PanelTabs>
              <DesignSection>
                <SectionHeader><SectionTitle>Background</SectionTitle></SectionHeader>
                <ColourRow><Swatch /><Hex>E5E5E5</Hex><span>100%</span><EyeButton aria-label="Hide background"><Eye /></EyeButton></ColourRow>
              </DesignSection>
              <DesignSection>
                <SectionHeader>
                  <SectionTitle>Export</SectionTitle>
                  <button aria-label="Add export"><Plus /></button>
                </SectionHeader>
              </DesignSection>
              <HelpButton aria-label="Help">
                <svg width="10" height="15" viewBox="0 0 10 15" fill="none" stroke="#fff" strokeWidth="1.1"><path d="M1.500 4Q1.500 1 5 1T8.500 4Q8.500 5.500 6.500 7T5 10.500M5 12.500V14" /></svg>
              </HelpButton>
            </Panel>
          </Workspace>
        </Window>
      </Body>
    </Desktop>
  );
}
